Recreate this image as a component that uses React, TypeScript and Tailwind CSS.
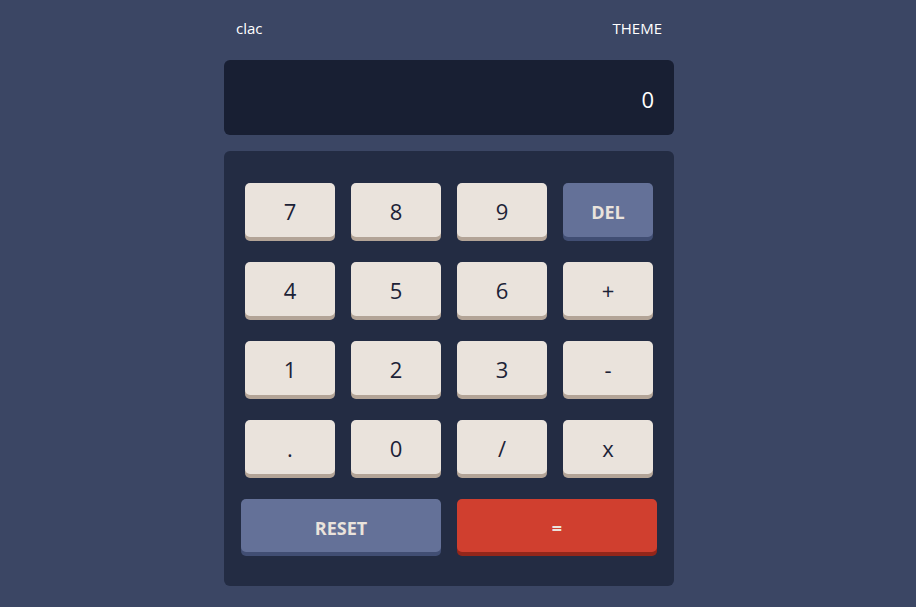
const keys = ["7", "8", "9", "DEL", "4", "5", "6", "+", "1", "2", "3", "-", ".", "0", "/", "x"];

function Key({ label }: { label: string }) {
  if (label === "DEL") {
    return (
      <button
        type="button"
        className="h-[54px] rounded-[5px] bg-[#647198] pt-1 text-[18px] font-bold text-[#eae3dc] shadow-[0_4px_0_#414e73]"
      >
        DEL
      </button>
    );
  }
  return (
    <button
      type="button"
      className="h-[54px] rounded-[5px] bg-[#eae3dc] pt-0.5 text-[22px] font-medium text-[#1c2236] shadow-[0_4px_0_#b3a497]"
    >
      {label}
    </button>
  );
}

export default function App() {
  return (
    <div className="min-h-screen bg-[#3b4664] font-['Open_Sans',sans-serif]">
      <div className="flex justify-center pr-[18px]">
        <div className="w-[450px]">
          {/* header */}
          <div className="flex h-[56px] items-center justify-between px-3 text-[15px] text-white">
            <span>clac</span>
            <span>THEME</span>
          </div>

          {/* display */}
          <div className="mt-1 flex h-[75px] items-center justify-end rounded-md bg-[#181f33] px-5 pt-1 text-[22px] text-white">
            0
          </div>

          {/* keypad */}
          <div className="mt-4 rounded-md bg-[#232c43] px-[17px] pt-8 pb-[34px]">
            <div className="grid grid-cols-4 gap-x-4 gap-y-[25px] px-1">
              {keys.map((k) => (
                <Key key={k} label={k} />
              ))}
            </div>
            <div className="mt-[25px] grid grid-cols-2 gap-4">
              <button
                type="button"
                className="h-[53px] rounded-[5px] bg-[#647198] pt-1.5 text-[18px] font-bold text-[#eae3dc] shadow-[0_4px_0_#414e73]"
              >
                RESET
              </button>
              <button
                type="button"
                className="h-[53px] rounded-[5px] bg-[#d03f2f] pt-1.5 text-[18px] font-bold text-[#eae3dc] shadow-[0_4px_0_#93261a]"
              >
                =
              </button>
            </div>
          </div>
        </div>
      </div>
    </div>
  );
}
